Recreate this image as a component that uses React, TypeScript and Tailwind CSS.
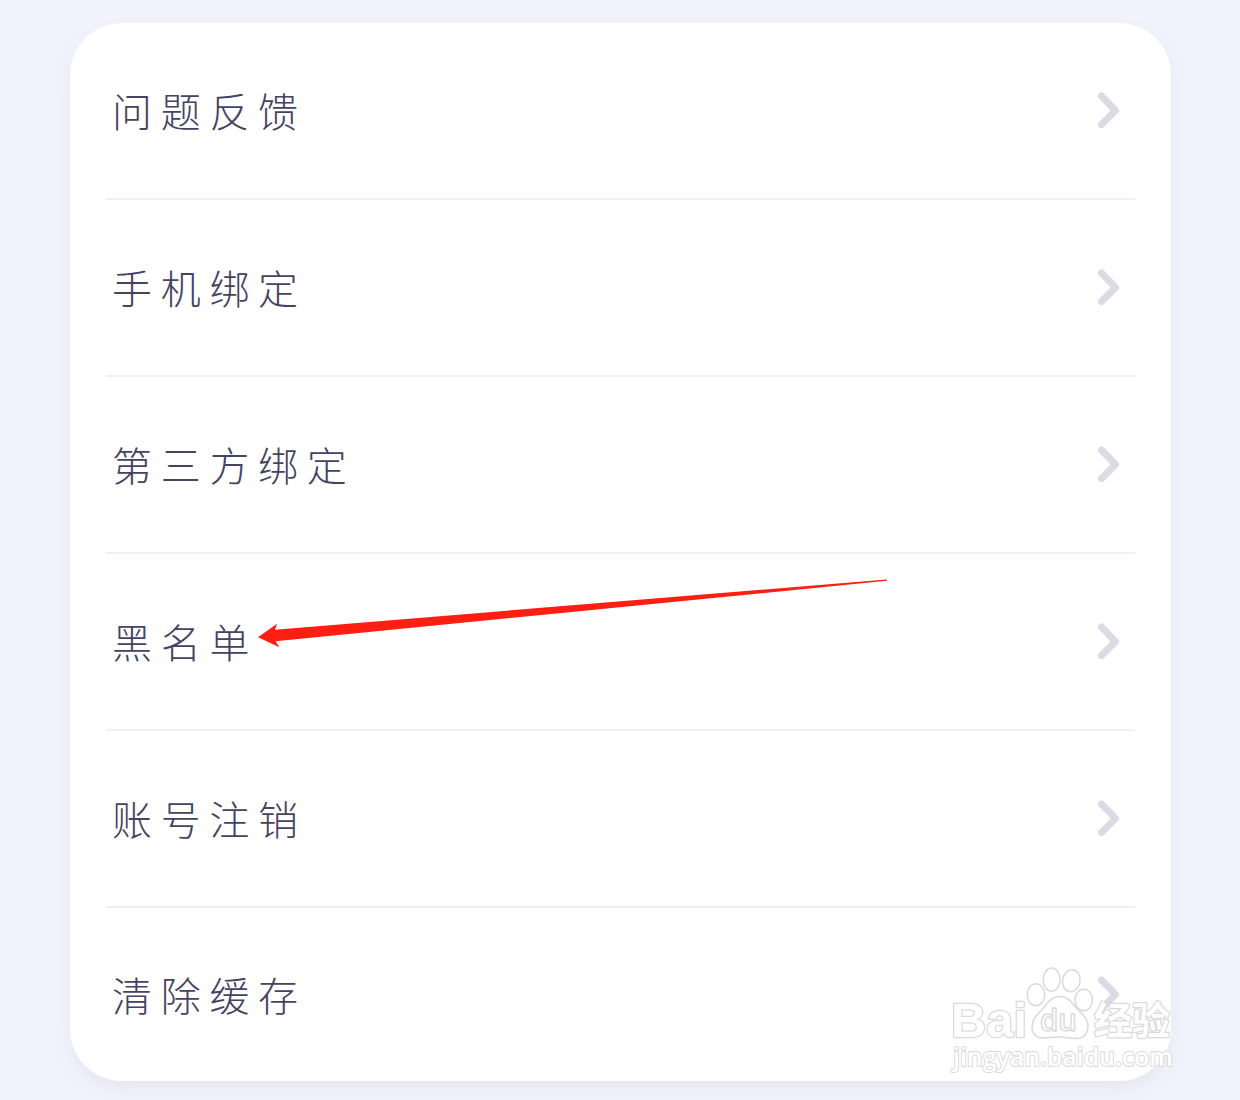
import clsx from "clsx";

const items = [
  "问题反馈",
  "手机绑定",
  "第三方绑定",
  "黑名单",
  "账号注销",
  "清除缓存",
];

function ChevronIcon() {
  return (
    <svg
      className="relative -top-px"
      width="24"
      height="38"
      viewBox="0 0 24 38"
      fill="none"
      stroke="#dcdbe4"
      strokeWidth="7"
      strokeLinecap="round"
      strokeLinejoin="round"
    >
      <path d="M4.500 5 18.500 19.500 4.500 33.500" />
    </svg>
  );
}

function Arrow() {
  return (
    <svg
      className="absolute left-[258px] top-[578px]"
      width="632"
      height="72"
      viewBox="258 578 632 72"
    >
      <path
        d="M258 637.2 277 623.8 275 629.8 886.5 579.4 887 580.8 275.5 641.2 279.5 647.3Z"
        fill="#ff1e12"
      />
    </svg>
  );
}

function Watermark() {
  return (
    <svg
      className="absolute left-[944px] top-[960px]"
      width="236"
      height="120"
      viewBox="944 960 236 120"
      fill="#ffffff"
      stroke="#dadadc"
      strokeWidth="1.5"
      strokeLinejoin="round"
    >
      <ellipse cx="1036" cy="994.8" rx="8.8" ry="11" />
      <ellipse cx="1051.6" cy="979.7" rx="8.4" ry="11.6" />
      <ellipse cx="1071.3" cy="980.8" rx="8.8" ry="11" transform="rotate(12 1071.3 980.8)" />
      <ellipse cx="1083.7" cy="1000" rx="8.8" ry="10.8" />
      <path d="M1060 996.5C1052 996.5 1048 1002 1044 1007.5C1039 1013 1032 1018 1032 1027C1032 1034 1037 1038.5 1043 1038C1049 1037.5 1054 1037 1060 1037C1066 1037 1071 1039 1077 1038.5C1084 1038 1088 1033 1088 1026C1088 1018 1081 1013 1076 1007.5C1071 1002 1068 996.5 1060 996.5Z" />
      <text
        x="951"
        y="1037"
        fontSize="49"
        fontFamily="Arial, 'Liberation Sans', sans-serif"
        fontWeight="700"
        paintOrder="stroke"
        strokeWidth="2.5"
        textLength="76"
        lengthAdjust="spacingAndGlyphs"
      >
        Bai
      </text>
      <text
        x="1040"
        y="1031"
        fontSize="30"
        fontFamily="'Open Sans', sans-serif"
        fontWeight="600"
        textLength="37"
        lengthAdjust="spacingAndGlyphs"
      >
        du
      </text>
      <text
        x="1094"
        y="1034"
        fontSize="38"
        fontFamily="'Noto Sans CJK SC', sans-serif"
        fontWeight="700"
        paintOrder="stroke"
        strokeWidth="2.5"
      >
        经验
      </text>
      <text
        x="953"
        y="1066"
        fontSize="25"
        fontFamily="'Open Sans', sans-serif"
        fontWeight="600"
        paintOrder="stroke"
        strokeWidth="2"
        textLength="220"
        lengthAdjust="spacingAndGlyphs"
      >
        jingyan.baidu.com
      </text>
    </svg>
  );
}

export default function App() {
  return (
    <div className="relative h-[1100px] w-[1240px] overflow-hidden bg-[#f2f2fc] pl-[70px] pt-[23px]">
      <div className="h-[1058px] w-[1101px] rounded-[52px] bg-white px-9 shadow-[0_8px_16px_#e7e7f2]">
        {items.map((item, index) => (
          <div
            key={item}
            className={clsx(
              "flex items-center justify-between pl-1.5 pr-3.5",
              index < items.length - 1
                ? "h-[177px] border-b-2 border-[#f0f0f2]"
                : "h-[173px]"
            )}
          >
            <span className="-mt-0.5 font-['Noto_Sans_CJK_SC',sans-serif] text-[40px] font-light leading-none tracking-[8.7px] text-[#454262]">
              {item}
            </span>
            <ChevronIcon />
          </div>
        ))}
      </div>
      <Arrow />
      <Watermark />
    </div>
  );
}
